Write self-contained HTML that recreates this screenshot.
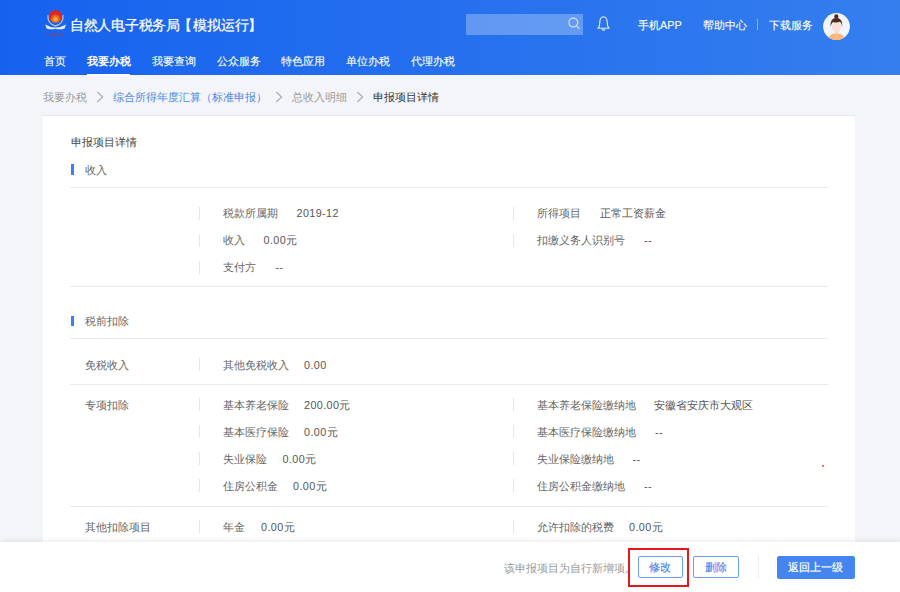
<!DOCTYPE html>
<html><head><meta charset="utf-8">
<style>
*{margin:0;padding:0;box-sizing:border-box}
html,body{width:900px;height:592px;overflow:hidden;background:#f3f5f9;font-family:"Liberation Sans",sans-serif;color:#333}
.a{position:absolute;white-space:nowrap;line-height:1}
#hdr{position:absolute;left:0;top:0;width:900px;height:75px;background:linear-gradient(90deg,#1662ee 0%,#347eee 100%)}
.w{color:#fff}
.m{-webkit-text-stroke:0.12px #fff}
.t{font-size:10.8px}
.g{color:#9a9a9a}
.l{color:#666}
.v{color:#555}
.n{letter-spacing:0.4px}
.hl{position:absolute;height:1px;background:#e9eaec}
.vl{position:absolute;width:1px;background:#e6e6e6}
#card{position:absolute;left:43px;top:115px;width:812px;height:430px;background:#fff;border-top:1px solid #e8e9ed}
#foot{position:absolute;left:0;top:542px;width:900px;height:50px;background:#fff;box-shadow:0 -1px 6px rgba(0,0,0,0.09)}
.btn{position:absolute;border:1px solid #6a9cf3;color:#3f7ef0;-webkit-text-stroke:0.1px #3f7ef0;border-radius:2px;font-size:10.8px;text-align:center}
</style></head><body>
<div id="hdr"></div>
<!-- logo -->
<svg class="a" style="left:44px;top:8px" width="24" height="31" viewBox="0 0 24 31">
<defs><radialGradient id="em" cx="0.5" cy="0.72" r="0.5"><stop offset="0" stop-color="#ffc83a"/><stop offset="0.4" stop-color="#f5801e"/><stop offset="0.8" stop-color="#e0301f"/><stop offset="1" stop-color="#d82426"/></radialGradient></defs>
<path d="M4 7.2 Q3 15.8 11.5 18 Q20 15.8 19 7.2" fill="none" stroke="#b4bfd0" stroke-width="1.3"/>
<circle cx="11.5" cy="8.4" r="6.4" fill="url(#em)"/>
<path d="M1.2 16.6 Q6 19.6 11.5 19.4 Q17 19.6 22 16.6 L20.6 20.4 Q16 22 11.5 20.8 Q7 22 2.6 20.4Z" fill="#e9eef6"/>
<path d="M3.4 24.2 L3.4 28.4" stroke="#d8262a" stroke-width="1"/>
<path d="M6.5 26.6 L20.5 26.6" stroke="#d8262a" stroke-width="1.5" stroke-dasharray="2 1.6"/>
</svg>
<div class="a w m" style="-webkit-text-stroke:0.25px #fff;left:70px;top:18px;font-size:14px;letter-spacing:-0.3px">自然人电子税务局</div>
<div class="a w m" style="-webkit-text-stroke:0.25px #fff;left:178px;top:18px;font-size:14px">【</div>
<div class="a w m" style="-webkit-text-stroke:0.25px #fff;left:193px;top:18px;font-size:14px">模拟运行</div>
<div class="a w m" style="-webkit-text-stroke:0.25px #fff;left:247.5px;top:18px;font-size:14px">】</div>
<div class="a" style="left:466px;top:13.5px;width:116.5px;height:21.5px;background:rgba(255,255,255,0.28)"></div>
<svg class="a" style="left:566px;top:15px" width="16" height="16" viewBox="0 0 16 16">
<circle cx="7.3" cy="7.6" r="4.4" fill="none" stroke="#d3e1f9" stroke-width="1.2"/>
<path d="M10.5 10.8 L13 13.3" stroke="#d3e1f9" stroke-width="1.2" stroke-linecap="round"/>
</svg>
<svg class="a" style="left:595px;top:15px" width="17" height="17" viewBox="0 0 17 17">
<path d="M2.9 13.2 Q4.7 11.8 4.7 8.2 Q4.7 1.9 8.5 1.7 Q12.3 1.9 12.3 8.2 Q12.3 11.8 14.1 13.2 Z" fill="none" stroke="#e1eafc" stroke-width="1.15" stroke-linejoin="round"/>
<path d="M7.2 14.8 L9.8 14.8" stroke="#e1eafc" stroke-width="1.2" stroke-linecap="round"/>
</svg>
<div class="a w m t" style="left:638px;top:19.5px">手机APP</div>
<div class="a w m t" style="left:703px;top:19.5px">帮助中心</div>
<div class="a" style="left:757px;top:19px;width:1px;height:11px;background:rgba(255,255,255,0.45)"></div>
<div class="a w m t" style="left:769px;top:19.5px">下载服务</div>
<svg class="a" style="left:823px;top:12.5px" width="27" height="27" viewBox="0 0 27 27">
<defs><clipPath id="cc"><circle cx="13.5" cy="13.5" r="13.4"/></clipPath></defs>
<circle cx="13.5" cy="13.5" r="13.4" fill="#f0f5fb"/>
<g clip-path="url(#cc)">
<path d="M4.5 27 Q5.5 20.8 13.5 20.3 Q21.5 20.8 22.5 27Z" fill="#fdb878"/>
<rect x="11.8" y="17" width="3.4" height="4" fill="#f6d6c8"/>
<ellipse cx="13.5" cy="14" rx="4.6" ry="5.5" fill="#f9e0d6"/>
<path d="M7.6 13.8 Q6.8 5.2 13.3 4.8 Q20 5.2 19.2 13.8 Q18.6 10 17 8.8 Q13.5 10.2 10 9 Q8.2 10.5 7.6 13.8Z" fill="#4e2c1e"/>
<circle cx="13.3" cy="3.4" r="2.1" fill="#4e2c1e"/>
</g>
</svg>

<div class="a w m t" style="left:43.5px;top:56px">首页</div>
<div class="a w t" style="left:86.5px;top:56px;font-weight:bold">我要办税</div>
<div class="a" style="left:87px;top:73.5px;width:43px;height:2.5px;background:#fff"></div>
<div class="a w m t" style="left:151.5px;top:56px">我要查询</div>
<div class="a w m t" style="left:216.5px;top:56px">公众服务</div>
<div class="a w m t" style="left:281px;top:56px">特色应用</div>
<div class="a w m t" style="left:346px;top:56px">单位办税</div>
<div class="a w m t" style="left:411px;top:56px">代理办税</div>

<div class="a t g" style="left:43px;top:92px">我要办税</div>
<svg class="a" style="left:96px;top:91px" width="8" height="12" viewBox="0 0 8 12"><path d="M1.3 0.9 L6.6 6 L1.3 11.1" fill="none" stroke="#aeb1b6" stroke-width="1.35"/></svg>
<div class="a t" style="left:113px;top:92px;color:#4a87ec">综合所得年度汇算（标准申报）</div>
<svg class="a" style="left:274.5px;top:91px" width="8" height="12" viewBox="0 0 8 12"><path d="M1.3 0.9 L6.6 6 L1.3 11.1" fill="none" stroke="#aeb1b6" stroke-width="1.35"/></svg>
<div class="a t g" style="left:292px;top:92px">总收入明细</div>
<svg class="a" style="left:355.5px;top:91px" width="8" height="12" viewBox="0 0 8 12"><path d="M1.3 0.9 L6.6 6 L1.3 11.1" fill="none" stroke="#aeb1b6" stroke-width="1.35"/></svg>
<div class="a t" style="left:373px;top:92px;color:#333">申报项目详情</div>

<div id="card"></div>
<div class="a t" style="left:70.5px;top:137px;color:#444">申报项目详情</div>
<div class="a" style="left:71px;top:164px;width:3px;height:10.5px;background:#3d7ff2"></div>
<div class="a t l" style="left:84.5px;top:165px">收入</div>
<div class="hl" style="left:70px;top:187px;width:758px"></div>

<div class="vl" style="left:199px;top:207px;height:13px"></div>
<div class="vl" style="left:199px;top:234px;height:13px"></div>
<div class="vl" style="left:199px;top:261px;height:13px"></div>
<div class="vl" style="left:513px;top:207px;height:13px"></div>
<div class="vl" style="left:513px;top:234px;height:13px"></div>
<div class="a t l" style="left:223px;top:208px">税款所属期</div><div class="a t v n" style="left:296.5px;top:208px">2019-12</div>
<div class="a t l" style="left:223px;top:235px">收入</div><div class="a t v n" style="left:263.5px;top:235px">0.00元</div>
<div class="a t l" style="left:223px;top:262px">支付方</div><div class="a t v n" style="left:275.5px;top:262px">--</div>
<div class="a t l" style="left:536.5px;top:208px">所得项目</div><div class="a t v" style="left:600px;top:208px">正常工资薪金</div>
<div class="a t l" style="left:536.5px;top:235px">扣缴义务人识别号</div><div class="a t v n" style="left:644px;top:235px">--</div>
<div class="hl" style="left:70px;top:286px;width:758px"></div>

<div class="a" style="left:71px;top:315.5px;width:3px;height:10.5px;background:#3d7ff2"></div>
<div class="a t l" style="left:85px;top:316px">税前扣除</div>
<div class="hl" style="left:70px;top:338px;width:758px"></div>

<div class="a t l" style="left:85px;top:360px">免税收入</div>
<div class="vl" style="left:199px;top:358px;height:13px"></div>
<div class="a t l" style="left:223px;top:360px">其他免税收入</div><div class="a t v n" style="left:304px;top:360px">0.00</div>
<div class="hl" style="left:70px;top:384px;width:758px"></div>

<div class="a t l" style="left:85px;top:400px">专项扣除</div>
<div class="vl" style="left:199px;top:398px;height:13px"></div>
<div class="vl" style="left:199px;top:425px;height:13px"></div>
<div class="vl" style="left:199px;top:452px;height:13px"></div>
<div class="vl" style="left:199px;top:479px;height:13px"></div>
<div class="vl" style="left:513px;top:398px;height:13px"></div>
<div class="vl" style="left:513px;top:425px;height:13px"></div>
<div class="vl" style="left:513px;top:452px;height:13px"></div>
<div class="vl" style="left:513px;top:479px;height:13px"></div>
<div class="a t l" style="left:223px;top:400px">基本养老保险</div><div class="a t v n" style="left:304px;top:400px">200.00元</div>
<div class="a t l" style="left:223px;top:427px">基本医疗保险</div><div class="a t v n" style="left:304px;top:427px">0.00元</div>
<div class="a t l" style="left:223px;top:454px">失业保险</div><div class="a t v n" style="left:282.5px;top:454px">0.00元</div>
<div class="a t l" style="left:223px;top:481px">住房公积金</div><div class="a t v n" style="left:293px;top:481px">0.00元</div>
<div class="a t l" style="left:536.5px;top:400px">基本养老保险缴纳地</div><div class="a t v" style="left:654px;top:400px">安徽省安庆市大观区</div>
<div class="a t l" style="left:536.5px;top:427px">基本医疗保险缴纳地</div><div class="a t v n" style="left:655px;top:427px">--</div>
<div class="a t l" style="left:536.5px;top:454px">失业保险缴纳地</div><div class="a t v n" style="left:632.5px;top:454px">--</div>
<div class="a t l" style="left:536.5px;top:481px">住房公积金缴纳地</div><div class="a t v n" style="left:644px;top:481px">--</div>
<div class="a" style="left:822px;top:465px;width:2px;height:2px;background:#f04040;border-radius:1px"></div>
<div class="hl" style="left:70px;top:506px;width:758px"></div>

<div class="a t l" style="left:85px;top:522px">其他扣除项目</div>
<div class="vl" style="left:199px;top:520px;height:13px"></div>
<div class="vl" style="left:513px;top:520px;height:13px"></div>
<div class="a t l" style="left:223px;top:522px">年金</div><div class="a t v n" style="left:261px;top:522px">0.00元</div>
<div class="a t l" style="left:536.5px;top:522px">允许扣除的税费</div><div class="a t v n" style="left:629px;top:522px">0.00元</div>

<div id="foot"></div>
<div class="a t g" style="left:504px;top:562.5px">该申报项目为自行新增项。</div>
<div class="btn" style="left:637.5px;top:556px;width:45px;height:22px;line-height:20px">修改</div>
<div class="btn" style="left:693px;top:556px;width:45.5px;height:22px;line-height:20px">删除</div>
<div class="a" style="left:757.5px;top:556px;width:1px;height:22px;background:#ededed"></div>
<div class="btn" style="left:777px;top:556px;width:77.5px;height:22.5px;line-height:21px;background:#4585f0;border-color:#4585f0;color:#fff;-webkit-text-stroke:0.2px #fff">返回上一级</div>
<div class="a" style="left:628px;top:548px;width:61px;height:39px;border:2px solid #e6161e"></div>
</body></html>
